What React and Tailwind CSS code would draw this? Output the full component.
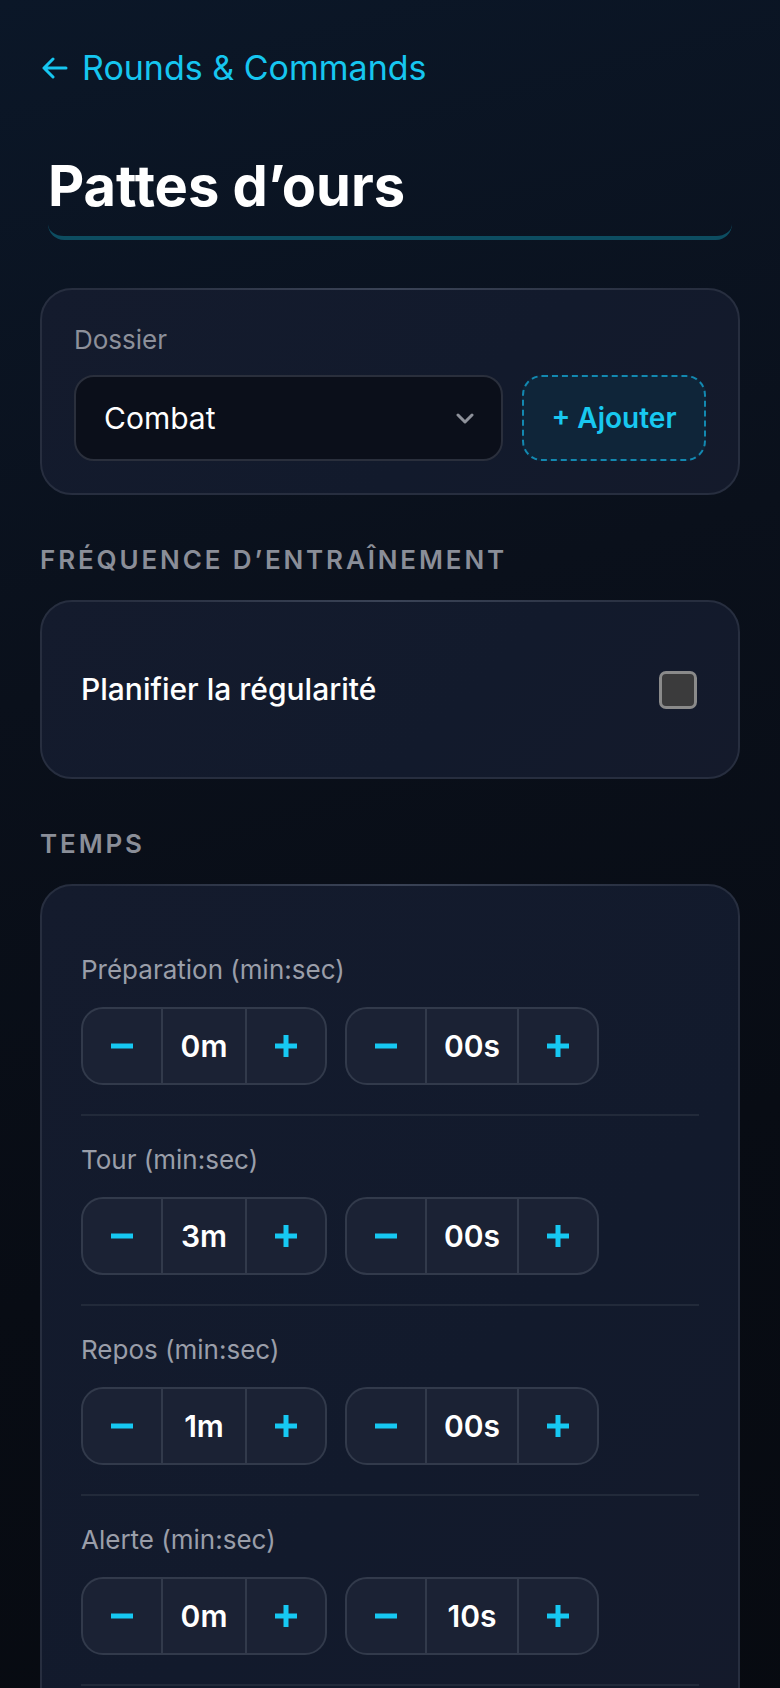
import { useState } from 'react';

// Stepper for a minutes or seconds value
const Stepper = ({ value, wide }) => (
  <div className="inline-flex h-[78px] items-stretch overflow-hidden rounded-[22px] border-2 border-[#323a4b] bg-[#1b2234]">
    <button className="flex w-[78px] items-center justify-center">
      <svg width="22" height="6" viewBox="0 0 22 6">
        <rect x="0" y="0.5" width="22" height="5" fill="#16c8f2" />
      </svg>
    </button>
    <div
      className={`flex items-center justify-center border-x-2 border-[#323a4b] text-[30px] font-semibold text-white ${
        wide ? 'w-[94px]' : 'w-[86px]'
      }`}
    >
      {value}
    </div>
    <button className="flex w-[78px] items-center justify-center">
      <svg width="22" height="22" viewBox="0 0 22 22">
        <rect x="0" y="8.5" width="22" height="5" fill="#16c8f2" />
        <rect x="8.5" y="0" width="5" height="22" fill="#16c8f2" />
      </svg>
    </button>
  </div>
);

// One time row : label + minutes stepper + seconds stepper
const TimeRow = ({ label, min, sec }) => (
  <div className="border-b-2 border-[#222a3a] pb-[29px] pt-[26px]">
    <p className="mb-[19px] text-[26px] leading-[36px] text-[#9a9ea9]">{label}</p>
    <div className="flex gap-[18px]">
      <Stepper value={min} />
      <Stepper value={sec} wide />
    </div>
  </div>
);

const Card = ({ className = '', children }) => (
  <div
    className={`relative rounded-[32px] border-2 border-[#272e3f] bg-[linear-gradient(135deg,#141b2d_0%,#121a2c_60%,#141a2b_100%)] ${className}`}
  >
    <div className="pointer-events-none absolute -top-[2px] left-[60px] right-[60px] h-[2px] bg-[linear-gradient(90deg,transparent,#3a4356,transparent)]" />
    {children}
  </div>
);

const SectionLabel = ({ children }) => (
  <p className="mb-6 mt-[49px] text-[26px] font-semibold uppercase leading-[32px] tracking-[0.11em] text-[#8a8e98]">
    {children}
  </p>
);

function App() {
  const [title, setTitle] = useState('Pattes d’ours');
  const [planned, setPlanned] = useState(false);

  const rows = [
    { label: 'Préparation (min:sec)', min: '0m', sec: '00s' },
    { label: 'Tour (min:sec)', min: '3m', sec: '00s' },
    { label: 'Repos (min:sec)', min: '1m', sec: '00s' },
    { label: 'Alerte (min:sec)', min: '0m', sec: '10s' },
  ];

  return (
    <div className="min-h-screen bg-[linear-gradient(165deg,#0b1728_0%,#0a101b_35%,#080c14_65%,#070a10_100%)] px-10 pb-20 pt-[48px] font-['Inter',sans-serif]">
      {/* Back link */}
      <a className="flex h-[40px] items-center gap-[14px] text-[34px] leading-[40px] text-[#16c6f0]">
        <svg className="ml-[2px]" width="26" height="22" viewBox="0 0 26 22" fill="none" stroke="#16c6f0" strokeWidth="3" strokeLinecap="round" strokeLinejoin="round">
          <path d="M24 11H2M11 2L2 11l9 9" />
        </svg>
        Rounds &amp; Commands
      </a>

      {/* Title */}
      <div className="mx-2 mt-[48px]">
        <input
          value={title}
          onChange={(e) => setTitle(e.target.value)}
          className="h-[104px] w-full rounded-b-[16px] border-b-4 border-[#0d4d61] bg-transparent px-0 text-[56px] font-bold text-white outline-none"
        />
      </div>

      {/* Dossier */}
      <Card className="mt-[48px] p-[32px]">
        <p className="mb-[17px] text-[26px] leading-[36px] text-[#8d909a]">Dossier</p>
        <div className="flex gap-[19px]">
          <div className="flex h-[86px] flex-1 items-center justify-between rounded-[20px] border-2 border-[#2a2f3c] bg-[#0b0f1a] pl-[28px] pr-[27px]">
            <span className="text-[30px] text-white">Combat</span>
            <svg width="18" height="11" viewBox="0 0 18 11" fill="none" stroke="#8e919a" strokeWidth="3" strokeLinecap="round" strokeLinejoin="round">
              <path d="M2 2l7 7 7-7" />
            </svg>
          </div>
          <button className="h-[86px] w-[184px] rounded-[20px] border-2 border-dashed border-[#1388b0] bg-[#0f2539] text-[28px] font-semibold text-[#18c8f0]">
            + Ajouter
          </button>
        </div>
      </Card>

      {/* Fréquence */}
      <SectionLabel>Fréquence d’entraînement</SectionLabel>
      <Card className="px-[39px] py-[65px]">
        <label className="flex items-center justify-between">
          <span className="text-[30px] font-medium text-white">Planifier la régularité</span>
          <button
            onClick={() => setPlanned(!planned)}
            className="mr-[2px] h-[38px] w-[38px] rounded-[7px] border-[3px] border-[#8a8a8a] bg-[#3b3b3c]"
          />
        </label>
      </Card>

      {/* Temps */}
      <SectionLabel>Temps</SectionLabel>
      <Card className="px-[39px] pb-[40px] pt-[40px]">
        {rows.map((r) => (
          <TimeRow key={r.label} {...r} />
        ))}
      </Card>
    </div>
  );
}

export default App;
